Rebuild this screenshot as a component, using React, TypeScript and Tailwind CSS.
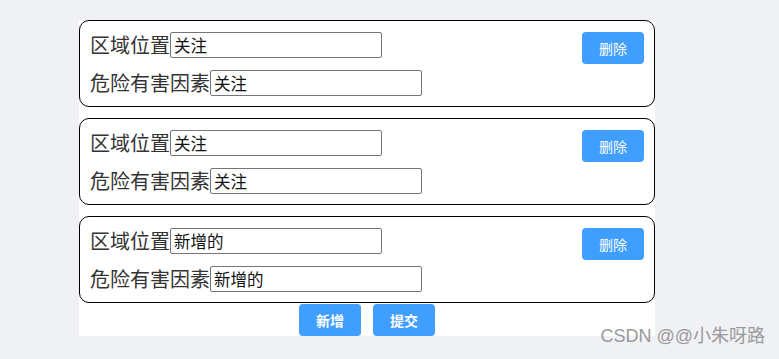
import React from "react";

const rows = [
  { area: "关注", hazard: "关注" },
  { area: "关注", hazard: "关注" },
  { area: "新增的", hazard: "新增的" },
];

const font = { fontFamily: '"Noto Sans CJK SC", "Microsoft YaHei", sans-serif' };

export default function App() {
  return (
    <div
      className="relative w-[779px] h-[359px] bg-[#f0f1f5] overflow-hidden"
      style={font}
    >
      <div className="absolute left-[79px] top-[20px] w-[576px] bg-white">
        <div className="flex flex-col gap-[11px]">
          {rows.map((r, i) => (
            <div
              key={i}
              className="flex justify-between border border-black rounded-[10px] pl-[10px] pr-[10px] pt-[11px] pb-[10px]"
            >
              <div className="flex flex-col gap-[12px]">
                <div className="flex items-center h-[26px]">
                  <span className="text-[20px] leading-[26px] text-[#333]">区域位置</span>
                  <input
                    defaultValue={r.area}
                    className="w-[212px] h-[26px] border border-[#767676] rounded-[2px] px-[3px] text-[16.5px] text-[#111] outline-none"
                    style={font}
                  />
                </div>
                <div className="flex items-center h-[26px]">
                  <span className="text-[20px] leading-[26px] text-[#333]">危险有害因素</span>
                  <input
                    defaultValue={r.hazard}
                    className="w-[212px] h-[26px] border border-[#767676] rounded-[2px] px-[3px] text-[16.5px] text-[#111] outline-none"
                    style={font}
                  />
                </div>
              </div>
              <button className="w-[62px] h-[32px] bg-[#409eff] text-white text-[14px] rounded-[4px]">
                删除
              </button>
            </div>
          ))}
        </div>
        <div className="flex justify-center gap-[12px] mt-[1px]">
          <button className="w-[62px] h-[32px] bg-[#409eff] text-white text-[14px] font-bold rounded-[4px]">
            新增
          </button>
          <button className="w-[62px] h-[32px] bg-[#409eff] text-white text-[14px] font-bold rounded-[4px]">
            提交
          </button>
        </div>
      </div>
      <div
        className="absolute right-[14px] top-[325px] text-[18px] leading-[22px] text-[#9a9a9a]"
        style={{ fontFamily: '"Liberation Sans", "Noto Sans CJK SC", sans-serif' }}
      >
        CSDN @@小朱呀路
      </div>
    </div>
  );
}
